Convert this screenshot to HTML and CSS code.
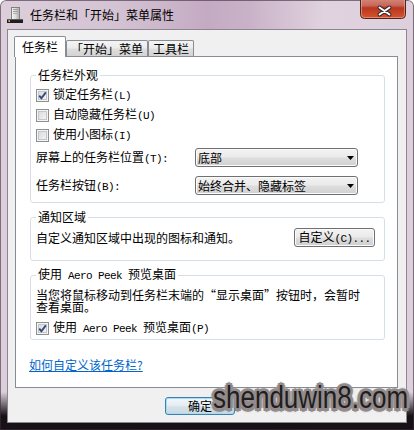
FILE: index.html
```html
<!DOCTYPE html>
<html lang="zh-CN">
<head>
<meta charset="utf-8">
<title>任务栏和「开始」菜单属性</title>
<link rel="stylesheet" href="styles.css">
</head>
<body>
<div class="window">
  <div class="titlebar">
    <svg class="app-icon" viewBox="0 0 16 16" width="16" height="16">
      <defs>
        <linearGradient id="tw" x1="0" y1="0" x2="1" y2="0">
          <stop offset="0" stop-color="#f4f4f4"/>
          <stop offset="0.5" stop-color="#dcdcdc"/>
          <stop offset="1" stop-color="#a9a9a9"/>
        </linearGradient>
      </defs>
      <rect x="4.5" y="0.5" width="8" height="12" fill="url(#tw)" stroke="#808080"/>
      <rect x="6" y="2" width="5" height="1" fill="#9c9c9c"/>
      <rect x="6" y="4" width="5" height="1" fill="#9c9c9c"/>
      <rect x="6" y="6" width="5" height="1" fill="#b0b0b0"/>
      <rect x="0" y="12" width="16" height="4" fill="#1e1e1e"/>
      <rect x="0" y="12" width="16" height="1" fill="#5a5a5a"/>
      <rect x="1" y="13" width="1" height="1" fill="#e8482c"/>
      <rect x="2" y="13" width="1" height="1" fill="#7cc242"/>
      <rect x="1" y="14" width="1" height="1" fill="#2d8ce0"/>
      <rect x="2" y="14" width="1" height="1" fill="#f5c400"/>
    </svg>
    <span class="title">任务栏和「开始」菜单属性</span>
    <span class="close">
      <svg viewBox="0 0 46 19" width="46" height="19">
        <defs>
          <linearGradient id="cg" x1="0" y1="0" x2="0" y2="1">
            <stop offset="0" stop-color="#dc9b8e"/>
            <stop offset="0.45" stop-color="#c9665a"/>
            <stop offset="0.55" stop-color="#b8371f"/>
            <stop offset="1" stop-color="#d8532f"/>
          </linearGradient>
        </defs>
        <rect x="0.5" y="-5" width="45" height="23.5" rx="4" fill="url(#cg)" stroke="#4a2420"/>
        <rect x="1.5" y="-4" width="43" height="21.5" rx="3" fill="none" stroke="#f0b8a8" stroke-opacity="0.55"/>
        <path d="M19.5 7.5 L29.5 14.5 M29.5 7.5 L19.5 14.5" stroke="#3a2a2a" stroke-width="4" stroke-linecap="round"/>
        <path d="M19.5 7.5 L29.5 14.5 M29.5 7.5 L19.5 14.5" stroke="#ffffff" stroke-width="2" stroke-linecap="round"/>
      </svg>
    </span>
  </div>

  <div class="client">
    <div class="tabs">
      <div class="tab active tab-taskbar">任务栏</div>
      <div class="tab tab-start">「开始」菜单</div>
      <div class="tab tab-tools">工具栏</div>
    </div>

    <div class="panel">
      <fieldset class="group g1">
        <legend>任务栏外观</legend>
        <div class="gbody">
          <label class="check"><span class="cb on"><svg viewBox="0 0 9 9" width="9" height="9"><polyline points="1.2,4.6 3.4,7.2 7.8,1.4" fill="none" stroke="#34497c" stroke-width="1.9"/></svg></span><span>锁定任务栏<span class="a">(L)</span></span></label>
          <label class="check"><span class="cb"></span><span>自动隐藏任务栏<span class="a">(U)</span></span></label>
          <label class="check"><span class="cb"></span><span>使用小图标<span class="a">(I)</span></span></label>
          <div class="field-row">
            <span>屏幕上的任务栏位置<span class="a">(T):</span></span>
            <div class="select"><span>底部</span><svg viewBox="0 0 7 4" width="7" height="4"><polygon points="0,0 7,0 3.5,4" fill="#000"/></svg></div>
          </div>
          <div class="field-row second">
            <span>任务栏按钮<span class="a">(B):</span></span>
            <div class="select"><span>始终合并、隐藏标签</span><svg viewBox="0 0 7 4" width="7" height="4"><polygon points="0,0 7,0 3.5,4" fill="#000"/></svg></div>
          </div>
        </div>
      </fieldset>

      <fieldset class="group g2">
        <legend>通知区域</legend>
        <div class="gbody">
          <span>自定义通知区域中出现的图标和通知。</span>
          <button class="btn custom" type="button">自定义<span class="a">(C)...</span></button>
        </div>
      </fieldset>

      <fieldset class="group g3">
        <legend>使用<span class="a"> Aero Peek </span>预览桌面</legend>
        <div class="gbody">
          <p>当您将鼠标移动到任务栏末端的“显示桌面”按钮时，会暂时<br>查看桌面。</p>
          <label class="check"><span class="cb on"><svg viewBox="0 0 9 9" width="9" height="9"><polyline points="1.2,4.6 3.4,7.2 7.8,1.4" fill="none" stroke="#34497c" stroke-width="1.9"/></svg></span><span>使用<span class="a"> Aero Peek </span>预览桌面<span class="a">(P)</span></span></label>
        </div>
      </fieldset>

      <a class="help" href="#">如何自定义该任务栏?</a>
    </div>

    <div class="footer">
      <button class="btn ok" type="button">确定</button>
    </div>
  </div>

  <div class="watermark">shenduwin8.com</div>
</div>
</body>
</html>
```

FILE: styles.css
```css
* { box-sizing: border-box; }

html, body {
  margin: 0;
  padding: 0;
}

body {
  width: 414px;
  height: 430px;
  overflow: hidden;
  background: #ffffff;
  font: 12px/14px "Noto Sans CJK SC", "Noto Sans CJK JP", sans-serif;
  color: #000;
}

.window {
  position: relative;
  width: 414px;
  height: 430px;
  overflow: hidden;
  border-radius: 6px 6px 0 0;
  display: flex;
  flex-direction: column;
  background:
    linear-gradient(180deg, rgba(20, 14, 20, 0) 0, rgba(20, 14, 20, 0) 392px, rgba(14, 10, 14, 0.96) 416px),
    linear-gradient(90deg, #dccfdb 0%, #d4c3d3 28%, #c4abc3 50%, #c9b2c8 60%, #e0d2de 78%, #ddcfdb 100%);
  box-shadow: inset 0 0 0 1px rgba(60, 44, 60, 0.6);
}

/* ---------- title bar ---------- */
.titlebar {
  height: 29px;
  flex: none;
  display: flex;
  align-items: center;
  padding: 0 8px 0 7px;
}

.app-icon {
  flex: none;
  display: block;
}

.title {
  margin-left: 7px;
  font-size: 12px;
  line-height: 14px;
  color: #000;
}

.close {
  margin-left: auto;
  align-self: flex-start;
  width: 46px;
  height: 19px;
}

.close svg { display: block; }

/* ---------- client area ---------- */
.client {
  margin: 0 7px;
  height: 394px;
  flex: none;
  background: #f0f0f0;
  border: 1px solid #8d8592;
  display: flex;
  flex-direction: column;
}

.tabs {
  display: flex;
  align-items: flex-end;
  height: 20px;
  margin: 6px 0 0 6px;
}

.tab {
  height: 16px;
  border: 1px solid #898c95;
  border-bottom: 0;
  border-radius: 2px 2px 0 0;
  background: linear-gradient(#f4f4f4, #ececec 45%, #dedede 55%, #d3d3d3);
  display: flex;
  align-items: center;
  justify-content: center;
  line-height: 14px;
  white-space: nowrap;
}

.tab.active {
  height: 21px;
  margin-bottom: -1px;
  background: #ffffff;
  position: relative;
  z-index: 1;
}

.tab-taskbar { width: 52px; }
.tab-start { width: 82px; }
.tab-tools { width: 46px; }

.panel {
  margin-left: 7px;
  width: 383px;
  height: 332px;
  background: #ffffff;
  border: 1px solid #898c95;
  padding: 11px 12px 0 14px;
}

/* ---------- group boxes ---------- */
.group {
  margin: 0;
  min-width: 0;
  border: 1px solid #d5dfe5;
  border-radius: 3px;
  padding: 0 9px 0 5px;
}

.group legend {
  padding: 0 2px;
  line-height: 14px;
}

.g1 .gbody { padding: 3px 0 7px; }

.g2 { margin-top: 7px; }
.g2 .gbody {
  padding: 4px 0 13px;
  display: flex;
  justify-content: space-between;
  align-items: center;
}

.g3 { margin-top: 6px; }
.g3 .gbody { padding: 6px 0 2px; }
.g3 p {
  margin: 0;
  line-height: 12px;
}
.g3 .check {
  height: 18px;
  margin-top: 6px;
}

.a {
  font-family: "Liberation Mono", "DejaVu Sans Mono", monospace;
  font-size: 11px;
  letter-spacing: -0.6px;
  white-space: pre;
}

.check {
  display: flex;
  align-items: center;
  gap: 4px;
  height: 20px;
}

.cb {
  flex: none;
  width: 13px;
  height: 13px;
  border: 1px solid #8e8f8f;
  background: linear-gradient(135deg, #d6d6d6, #f8f8f8);
  box-shadow: inset 0 0 0 1px #f4f4f4, inset 0 0 0 2px #c3c6ca;
  display: flex;
  align-items: center;
  justify-content: center;
}

.cb svg { display: block; }

.field-row {
  display: grid;
  grid-template-columns: 159px 163px;
  align-items: center;
  height: 19px;
  margin-top: 3px;
}

.field-row.second { margin-top: 9px; }

.select {
  height: 19px;
  border: 1px solid #707070;
  border-radius: 3px;
  background: linear-gradient(#f3f3f3, #ebebeb 45%, #dddddd 55%, #d0d0d0);
  box-shadow: inset 0 0 0 1px #fbfbfb;
  display: flex;
  align-items: center;
  justify-content: space-between;
  padding: 0 3px 0 2px;
  line-height: 14px;
}

.select svg { display: block; }

.btn {
  font: inherit;
  color: #000;
  padding: 0;
  margin: 0;
  border: 1px solid #707070;
  border-radius: 3px;
  background: linear-gradient(#f3f3f3, #ebebeb 45%, #dddddd 55%, #cfcfcf);
  box-shadow: inset 0 0 0 1px #fbfbfb;
  line-height: 14px;
}

.btn.custom {
  width: 81px;
  height: 19px;
}

.help {
  display: block;
  width: max-content;
  margin: 17px 0 0 -1px;
  color: #0066cc;
  text-decoration: underline;
  line-height: 15px;
}

.footer {
  padding: 9px 0 0 157px;
}

.btn.ok {
  width: 70px;
  height: 18px;
  border-color: #3c7fb1;
  box-shadow: inset 0 0 0 1px #a6ddf6;
  background: linear-gradient(#f1f6f9, #e6eef3 45%, #d6e2ea 55%, #c9d7e0);
}

/* ---------- overlay watermark ---------- */
.watermark {
  position: absolute;
  left: 213px;
  top: 388px;
  font-family: "Liberation Sans", Arial, sans-serif;
  font-size: 26px;
  line-height: 25px;
  color: #201e1e;
  white-space: nowrap;
  transform: scaleY(1.2);
  transform-origin: 0 100%;
  text-shadow:
    2px 0 0 #938b8b, -2px 0 0 #938b8b, 0 2px 0 #938b8b, 0 -2px 0 #938b8b,
    2px 2px 0 #938b8b, -2px -2px 0 #938b8b, 2px -2px 0 #938b8b, -2px 2px 0 #938b8b,
    3px 0 1px #9a9292, -3px 0 1px #9a9292, 0 3px 1px #9a9292, 0 -3px 1px #9a9292;
}
```
